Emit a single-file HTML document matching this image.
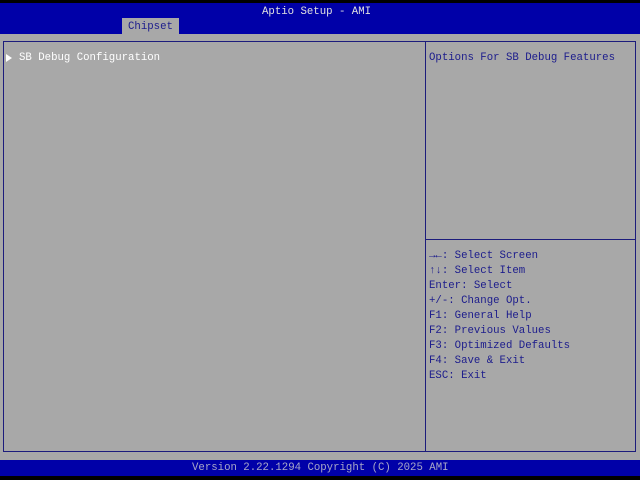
<!DOCTYPE html>
<html><head><style>
body{margin:0;width:640px;height:480px;background:#000;position:relative;overflow:hidden;font-family:"Liberation Mono","DejaVu Sans Mono",monospace;font-size:10.7px;}
.a{position:absolute;}
.t{position:absolute;white-space:pre;line-height:15px;}
</style></head><body>
<div class="a" style="left:0;top:3px;width:640px;height:31px;background:#0000a8"></div>
<div class="t" style="left:262px;top:5px;color:#e0e0e0">Aptio Setup - AMI</div>
<div class="a" style="left:122px;top:18px;width:57px;height:16px;background:#a8a8a8"></div>
<div class="t" style="left:128px;top:20px;color:#1c1c8c">Chipset</div>
<div class="a" style="left:0;top:34px;width:640px;height:426px;background:#a8a8a8"></div>
<div class="a" style="left:3px;top:41px;width:633px;height:411px;border:1px solid #1c1c7c;box-sizing:border-box"></div>
<div class="a" style="left:425px;top:41px;width:1px;height:411px;background:#1c1c7c"></div>
<div class="a" style="left:426px;top:239px;width:210px;height:1px;background:#1c1c7c"></div>
<div class="a" style="left:6px;top:54px;width:0;height:0;border-left:6px solid #fff;border-top:4px solid transparent;border-bottom:4px solid transparent"></div>
<div class="t" style="left:19px;top:51px;color:#fff">SB Debug Configuration</div>
<div class="t" style="left:429px;top:51px;color:#1c1c8c">Options For SB Debug Features</div>
<div class="t" style="left:429px;top:249px;color:#1c1c8c"><b>→←</b>: Select Screen
<b>↑↓</b>: Select Item
Enter: Select
+/-: Change Opt.
F1: General Help
F2: Previous Values
F3: Optimized Defaults
F4: Save &amp; Exit
ESC: Exit</div>
<div class="a" style="left:0;top:460px;width:640px;height:16px;background:#0000a8"></div>
<div class="t" style="left:192px;top:461px;color:#a8a8c8">Version 2.22.1294 Copyright (C) 2025 AMI</div>
</body></html>
